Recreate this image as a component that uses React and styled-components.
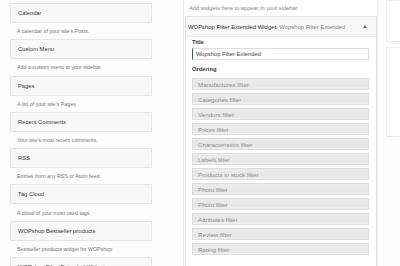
import styled, { createGlobalStyle } from "styled-components";

const Global = createGlobalStyle`
  html, body {
    margin: 0;
    padding: 0;
    background: #fdfdfd;
    overflow: hidden;
  }
  body {
    font-family: "Liberation Sans", Arial, sans-serif;
    width: 400px;
    height: 266px;
  }
`;

const Page = styled.div`
  display: flex;
  width: 400px;
  height: 266px;
  overflow: hidden;
`;

const Available = styled.div`
  width: 142px;
  padding: 3px 0 0 10px;
  flex-shrink: 0;
`;

const WidgetTop = styled.div`
  height: 20px;
  box-sizing: border-box;
  border: 1px solid #e6e6e6;
  background: #f7f7f7;
  display: flex;
  align-items: center;
  padding-left: 7px;
  font-size: 5.8px;
  color: #33383d;
  white-space: nowrap;
  overflow: hidden;
`;

const WidgetDesc = styled.div`
  height: 16.3px;
  display: flex;
  align-items: center;
  padding-left: 7px;
  font-size: 5.3px;
  color: #6f7479;
  white-space: nowrap;
`;

const Sidebar = styled.div`
  margin-left: 31px;
  width: 195px;
  flex-shrink: 0;
  border-left: 1px solid #ececec;
  border-right: 1px solid #ececec;
  background: #fff;
  padding-left: 1px;
  box-sizing: border-box;
`;

const SidebarDesc = styled.div`
  height: 17px;
  display: flex;
  align-items: center;
  padding-left: 4px;
  font-size: 5.7px;
  color: #7f8489;
  margin-top: -1px;
  white-space: nowrap;
`;

const Widget = styled.div`
  width: 192px;
  border: 1px solid #e3e3e3;
  box-sizing: border-box;
  height: 300px;
`;

const Header = styled.div`
  height: 19px;
  background: #f7f7f7;
  border-bottom: 1px solid #ececec;
  display: flex;
  align-items: center;
  padding: 0 0 0 2px;
  font-size: 5.9px;
  color: #2c3136;
  span {
    color: #7f8489;
  }
`;

const HeaderTitle = styled.div`
  flex: 1;
  white-space: nowrap;
  overflow: hidden;
`;

const Arrow = styled.div`
  width: 0;
  height: 0;
  border-left: 2px solid transparent;
  border-right: 2px solid transparent;
  border-bottom: 3px solid #6c7176;
  margin-right: 9px;
`;

const Body = styled.div`
  padding: 0 7px 0 6px;
`;

const Label = styled.div`
  font-size: 5.8px;
  font-weight: bold;
  color: #32373c;
  height: ${({ h }) => h}px;
  display: flex;
  align-items: center;
`;

const Input = styled.div`
  height: 12px;
  box-sizing: border-box;
  border: 1px solid #dcdcdc;
  border-left: 1.5px solid #2e5f8a;
  display: flex;
  align-items: center;
  padding-left: 3px;
  font-size: 5.8px;
  color: #3c4146;
  margin-top: 1px;
`;

const FilterList = styled.div`
  display: flex;
  flex-direction: column;
  gap: 3px;
  margin-top: 1px;
`;

const Filter = styled.div`
  height: 12px;
  box-sizing: border-box;
  border: 1px solid #dcdcdc;
  background: linear-gradient(#ebebeb, #e6e6e6 70%, #f0f0f0);
  display: flex;
  align-items: center;
  padding-left: 5px;
  font-size: 6.2px;
  color: #8d8d8d;
  white-space: nowrap;
`;

const Right = styled.div`
  margin-left: 8px;
  display: flex;
  flex-direction: column;
  gap: 5px;
  flex-shrink: 0;
`;

const RightBox = styled.div`
  width: 30px;
  height: ${({ h }) => h}px;
  border: 1px solid #ececec;
  box-sizing: border-box;
  background: #fff;
`;

const available = [
  ["Calendar", "A calendar of your site’s Posts."],
  ["Custom Menu", "Add a custom menu to your sidebar."],
  ["Pages", "A list of your site’s Pages."],
  ["Recent Comments", "Your site’s most recent comments."],
  ["RSS", "Entries from any RSS or Atom feed."],
  ["Tag Cloud", "A cloud of your most used tags."],
  ["WOPshop Bestseller products", "Bestseller products widget for WOPshop"],
  ["WOPshop Filter Extended Widget", ""],
];

const filters = [
  "Manufactures filter",
  "Categories filter",
  "Vendors filter",
  "Prices filter",
  "Characteristics filter",
  "Labels filter",
  "Products in stock filter",
  "Photo filter",
  "Photo filter",
  "Attributes filter",
  "Review filter",
  "Rating filter",
];

export default function App() {
  return (
    <Page>
      <Global />
      <Available>
        {available.map(([title, desc], i) => (
          <div key={i}>
            <WidgetTop>{title}</WidgetTop>
            <WidgetDesc>{desc}</WidgetDesc>
          </div>
        ))}
      </Available>
      <Sidebar>
        <SidebarDesc>Add widgets here to appear in your sidebar.</SidebarDesc>
        <Widget>
          <Header>
            <HeaderTitle>
              WOPshop Filter Extended Widget: <span>Wopshop Filter Extended</span>
            </HeaderTitle>
            <Arrow />
          </Header>
          <Body>
            <Label h={10}>Title</Label>
            <Input>Wopshop Filter Extended</Input>
            <Label h={17}>Ordering</Label>
            <FilterList>
              {filters.map((f, i) => (
                <Filter key={i}>{f}</Filter>
              ))}
            </FilterList>
          </Body>
        </Widget>
      </Sidebar>
      <Right>
        <RightBox h={42} />
        <RightBox h={90} />
      </Right>
    </Page>
  );
}
